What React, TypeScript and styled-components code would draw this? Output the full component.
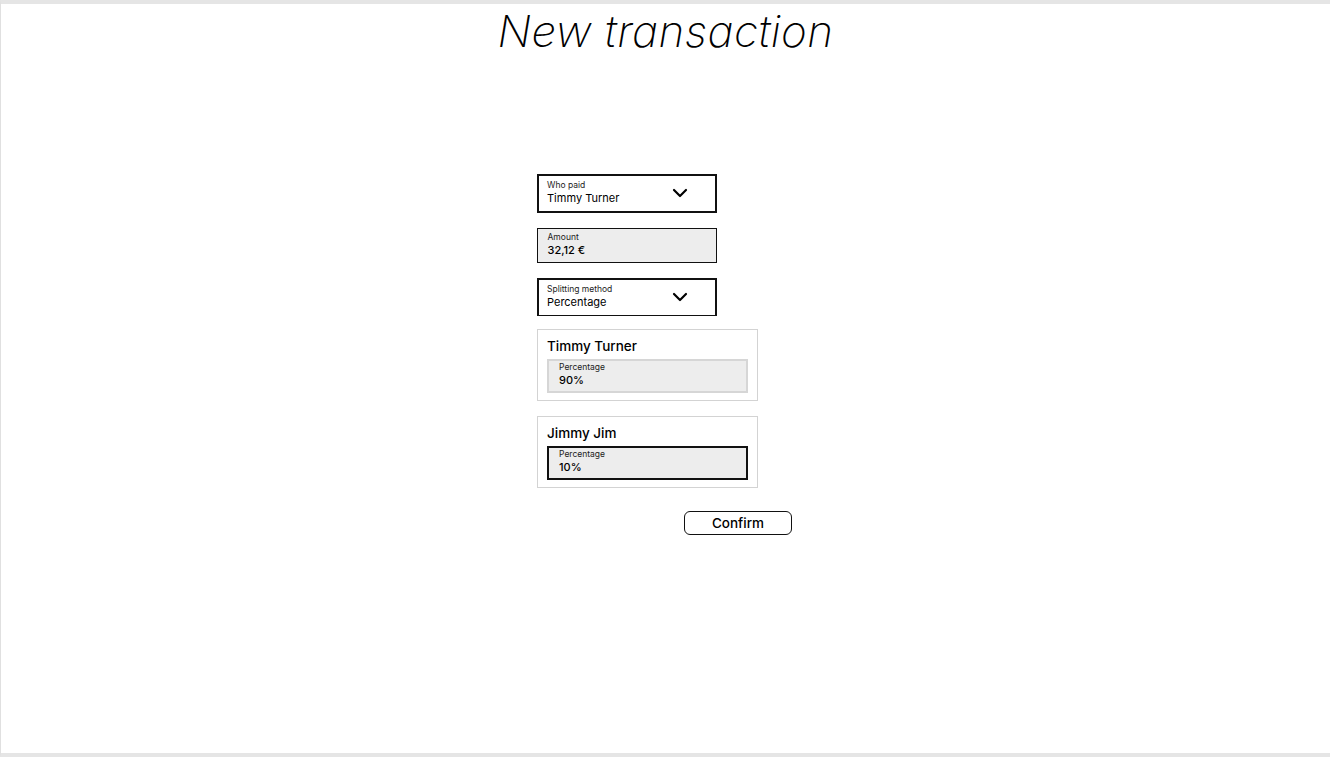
import React from "react";
import styled, { createGlobalStyle } from "styled-components";

const Global = createGlobalStyle`
  html, body { margin: 0; padding: 0; background: #ffffff; }
  body { font-family: Inter, "Noto Sans", sans-serif; color: #000; }
  * { box-sizing: border-box; }
`;

const Frame = styled.div`
  width: 1330px;
  height: 757px;
  border-top: 4px solid #e5e5e5;
  border-left: 1px solid #e0e0e0;
  border-bottom: 4px solid #e5e5e5;
  display: flex;
  flex-direction: column;
  overflow: hidden;
`;

const Title = styled.h1`
  margin: 0;
  padding-top: 1px;
  text-align: center;
  font-family: Inter, sans-serif;
  font-style: italic;
  font-weight: 200;
  font-size: 44px;
  line-height: 52px;
  letter-spacing: 0.45px;
`;

const Form = styled.div`
  margin-top: 117px;
  margin-left: calc(50% - 128.5px);
  width: 221px;
  display: flex;
  flex-direction: column;
  align-items: flex-start;
`;

const Field = styled.div<{ $filled?: boolean; $h: number; $gap: number; $thinBottom?: boolean }>`
  width: 180px;
  height: ${(p) => p.$h}px;
  margin-bottom: ${(p) => p.$gap}px;
  border: ${(p) => (p.$filled ? "1.5px" : "2px")} solid #111;
  ${(p) => (p.$thinBottom ? "border-bottom-width: 1px;" : "")}
  background: ${(p) => (p.$filled ? "#ededed" : "#fff")};
  display: flex;
  align-items: center;
  justify-content: space-between;
  padding: 0 27px 2px ${(p) => (p.$filled ? "9.5px" : "8px")};
`;

const FieldText = styled.div`
  display: flex;
  flex-direction: column;
`;

const Label = styled.span`
  font-size: 8.5px;
  line-height: 11px;
  color: #222;
`;

const Value = styled.span<{ $weight?: number }>`
  font-size: 11px;
  line-height: 15px;
  font-weight: ${(p) => p.$weight ?? 400};
`;

const Chevron = () => (
  <svg width="16" height="10" viewBox="0 0 16 10" fill="none">
    <path d="M2 2 L8 8 L14 2" stroke="#000" strokeWidth="2.2" strokeLinecap="round" strokeLinejoin="round" />
  </svg>
);

const Card = styled.div`
  width: 221px;
  height: 72px;
  border: 1px solid #d3d3d3;
  padding: 7px 9px 0 9px;
  margin-bottom: 15px;
  display: flex;
  flex-direction: column;
`;

const CardName = styled.div`
  font-size: 13.5px;
  line-height: 18px;
  font-weight: 500;
  margin-bottom: 4px;
`;

const Pct = styled.div<{ $active?: boolean }>`
  height: 34px;
  width: 201px;
  background: #ededed;
  border: 2px solid ${(p) => (p.$active ? "#111" : "#d6d6d6")};
  padding: 1px 10px;
  display: flex;
  flex-direction: column;
`;

const PctValue = styled.span`
  font-size: 11px;
  line-height: 15px;
  font-weight: 500;
`;

const Confirm = styled.button`
  margin-top: 8px;
  margin-left: 147px;
  width: 108px;
  height: 24px;
  border: 1px solid #111;
  border-radius: 6px;
  background: #fff;
  font-family: Inter, sans-serif;
  font-size: 13.5px;
  font-weight: 500;
  color: #000;
  padding: 0;
  cursor: pointer;
`;

export default function App() {
  return (
    <>
      <Global />
      <Frame>
        <Title>New transaction</Title>
        <Form>
          <Field $h={39} $gap={15}>
            <FieldText>
              <Label>Who paid</Label>
              <Value>Timmy Turner</Value>
            </FieldText>
            <Chevron />
          </Field>
          <Field $filled $h={35} $gap={15}>
            <FieldText>
              <Label>Amount</Label>
              <Value $weight={500}>32,12 €</Value>
            </FieldText>
          </Field>
          <Field $h={38} $gap={13} $thinBottom>
            <FieldText>
              <Label>Splitting method</Label>
              <Value>Percentage</Value>
            </FieldText>
            <Chevron />
          </Field>
          <Card>
            <CardName>Timmy Turner</CardName>
            <Pct>
              <Label>Percentage</Label>
              <PctValue>90%</PctValue>
            </Pct>
          </Card>
          <Card>
            <CardName>Jimmy Jim</CardName>
            <Pct $active>
              <Label>Percentage</Label>
              <PctValue>10%</PctValue>
            </Pct>
          </Card>
          <Confirm>Confirm</Confirm>
        </Form>
      </Frame>
    </>
  );
}
